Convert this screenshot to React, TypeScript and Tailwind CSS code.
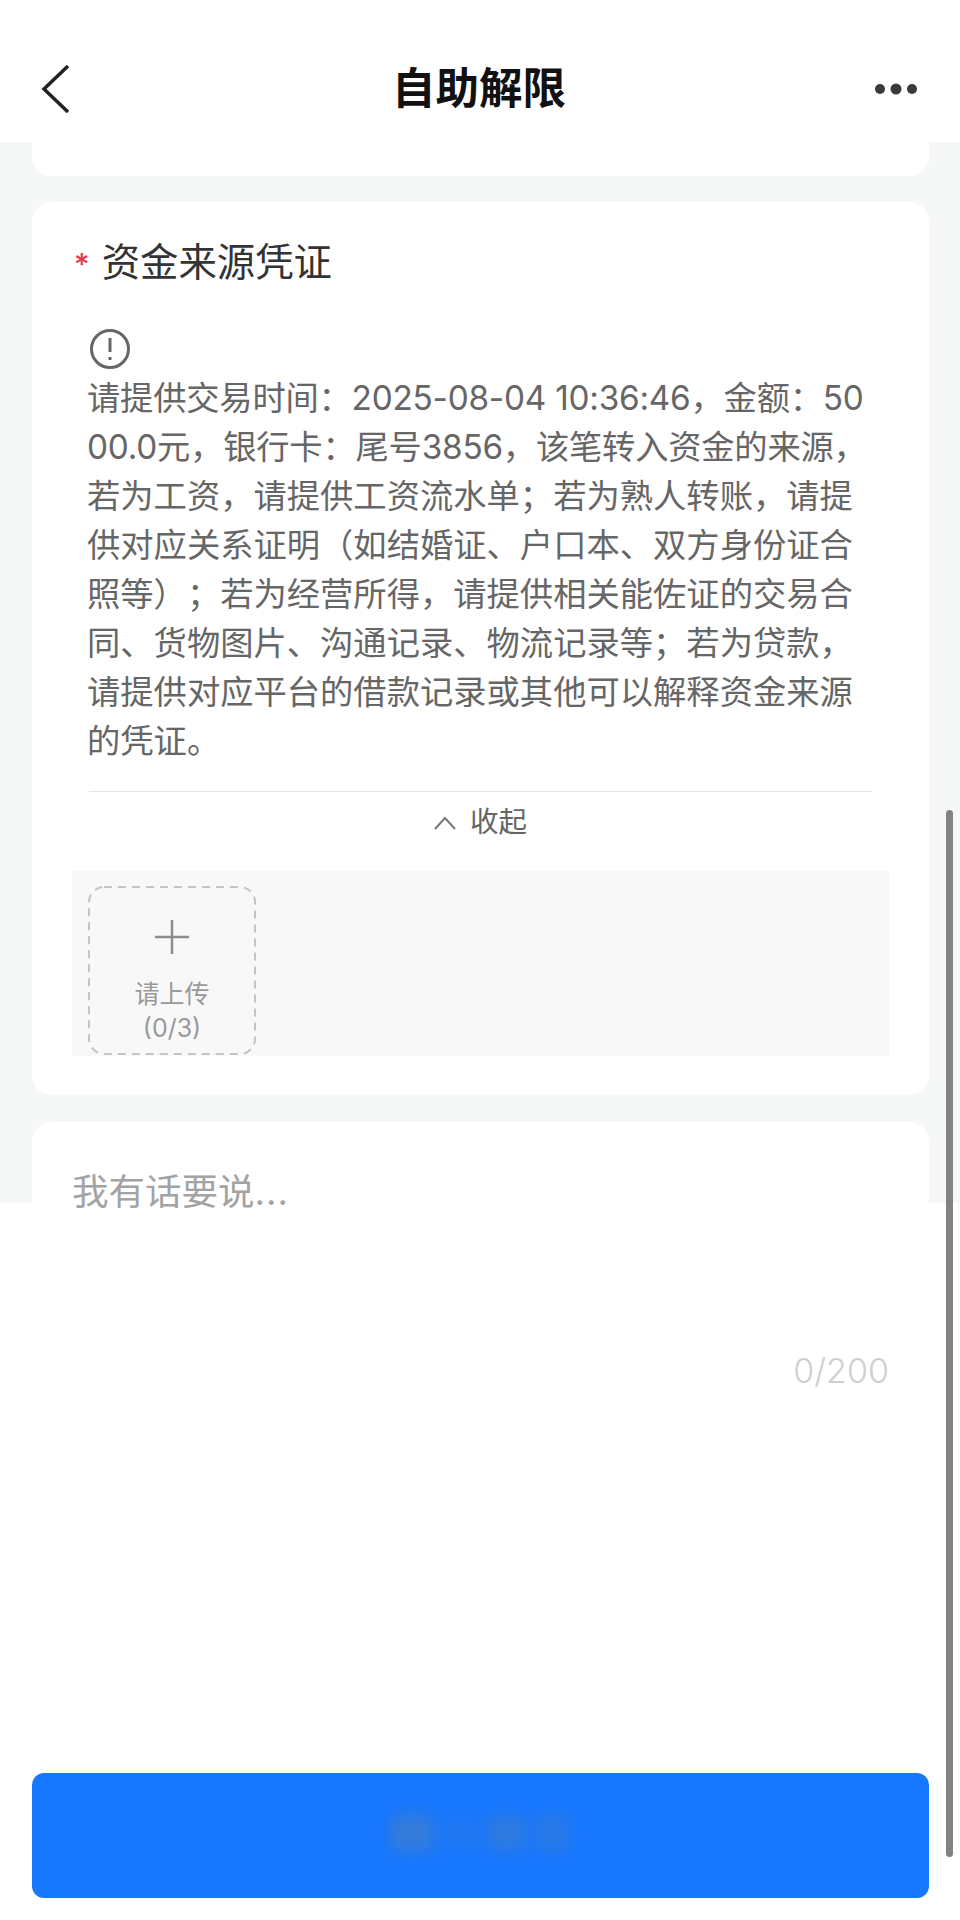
import React from 'react';

const font = 'font-["Inter","Noto_Sans_CJK_SC",sans-serif]';

const lines = [
  '请提供交易时间：2025-08-04 10:36:46，金额：50',
  '00.0元，银行卡：尾号3856，该笔转入资金的来源，',
  '若为工资，请提供工资流水单；若为熟人转账，请提',
  '供对应关系证明（如结婚证、户口本、双方身份证合',
  '照等）；若为经营所得，请提供相关能佐证的交易合',
  '同、货物图片、沟通记录、物流记录等；若为贷款，',
  '请提供对应平台的借款记录或其他可以解释资金来源',
  '的凭证。',
];

export default function App() {
  return (
    <div className={`relative h-[1920px] w-[960px] overflow-hidden bg-white ${font}`}>
      {/* Header */}
      <header className="grid h-[142px] grid-cols-[1fr_auto_1fr] items-center pl-[41px] pr-[43px] pt-[36px]">
        <svg width="28" height="48" viewBox="0 0 28 48" fill="none" stroke="#222" strokeWidth="3.5">
          <path d="M27 1 3 24l24 23" />
        </svg>
        <h1 className="text-[43.5px] font-semibold leading-none text-[#111]">自助解限</h1>
        <svg className="justify-self-end" width="42" height="12" viewBox="0 0 42 12" fill="#3a3a3a">
          <circle cx="5" cy="6" r="5" />
          <circle cx="21" cy="6" r="5.5" />
          <circle cx="37" cy="6" r="5" />
        </svg>
      </header>

      {/* Grey scroll area */}
      <main className="h-[1061px] bg-[#f6f7f7] pl-[32px] pr-[31px]">
        <div className="h-[34px] rounded-b-[20px] bg-white" />

        <section className="mt-[26px] h-[893px] rounded-[20px] bg-white px-[40px] pt-[37px]">
          <div className="flex h-[46px] items-center">
            <span className="ml-[2px] mr-[12px] mt-[4px] text-[30px] font-medium leading-none text-[#e5384a]">*</span>
            <h2 className="text-[38.4px] font-normal leading-[46px] text-[#333]">资金来源凭证</h2>
          </div>

          <div className="ml-[15px] mt-[44px] w-[800px]">
            <svg className="ml-[3px]" width="40" height="40" viewBox="0 0 40 40" fill="none" stroke="#666" strokeWidth="3">
              <circle cx="20" cy="20" r="18.5" />
              <path d="M20 9v14" />
              <path d="M20 28v3" />
            </svg>
            <div className="mt-[5px] text-[33.3px] leading-[49px] text-[#666] [text-spacing-trim:space-all]">
              {lines.map((l, i) => (
                <p key={l} className={i < 2 ? 'whitespace-nowrap tracking-[-0.22px]' : 'whitespace-nowrap'}>{l}</p>
              ))}
            </div>
          </div>

          <div className="ml-[17px] mt-[25px] flex h-[60px] w-[783px] items-center justify-center gap-[14px] border-t border-[#e6e6e6] pt-[2px]">
            <svg width="22" height="14" viewBox="0 0 22 14" fill="none" stroke="#777" strokeWidth="2">
              <path d="M1 13 11 2l10 11" />
            </svg>
            <span className="text-[28.5px] leading-none text-[#666]">收起</span>
          </div>

          <div className="mt-[20px] h-[185px] w-[817px] bg-[#f8f8f8] pl-[16px] pt-[15px]">
            <div className="relative flex h-[169px] w-[168px] flex-col items-center pt-[34px]">
              {/* dashes are longer than a css dashed border gives */}
              <svg className="absolute inset-0" width="168" height="169" fill="none" stroke="#c4c4c4" strokeWidth="2" strokeDasharray="8 6">
                <rect x="1" y="1" width="166" height="167" rx="15" />
              </svg>
              <svg width="34" height="34" viewBox="0 0 34 34" fill="none" stroke="#8c8c8c" strokeWidth="2.5">
                <path d="M0 17h34M17 0v34" />
              </svg>
              <span className="mt-[23px] text-[25px] leading-[34px] text-[#999]">请上传</span>
              <span className="text-[25px] leading-[34px] text-[#999]">(0/3)</span>
            </div>
          </div>
        </section>

        <section className="mt-[27px] h-[640px] rounded-t-[20px] bg-white px-[40px] pt-[44px]">
          <p className="text-[36.5px] leading-[52px] text-[#a3a3a3]">
            我有话要说<span className="tracking-[1px]">...</span>
          </p>
          <p className="mt-[133px] text-right text-[34px] font-light leading-[40px] text-[#cfcfcf]">0/200</p>
        </section>
      </main>

      {/* Bottom button */}
      <div className="mt-[570px] pl-[32px] pr-[31px]">
        <button className="flex h-[125px] w-full items-center justify-center gap-[8px] rounded-[12px] bg-[#1677ff] pb-[6px] pr-[2px]">
          {/* label is smudged out in the picture */}
          <span className="h-[38px] w-[44px] rounded-[8px] bg-[#4f80bb] opacity-55 blur-[8px]" />
          <span className="h-[32px] w-[38px] rounded-[8px] bg-[#4f80bb] opacity-20 blur-[8px]" />
          <span className="h-[36px] w-[38px] rounded-[8px] bg-[#4f80bb] opacity-45 blur-[8px]" />
          <span className="h-[38px] w-[36px] rounded-[8px] bg-[#4f80bb] opacity-35 blur-[8px]" />
        </button>
      </div>

      {/* Scrollbar */}
      <div className="absolute right-[7px] top-[810px] h-[1047px] w-[7px] rounded-full bg-[#828282]" />
    </div>
  );
}
